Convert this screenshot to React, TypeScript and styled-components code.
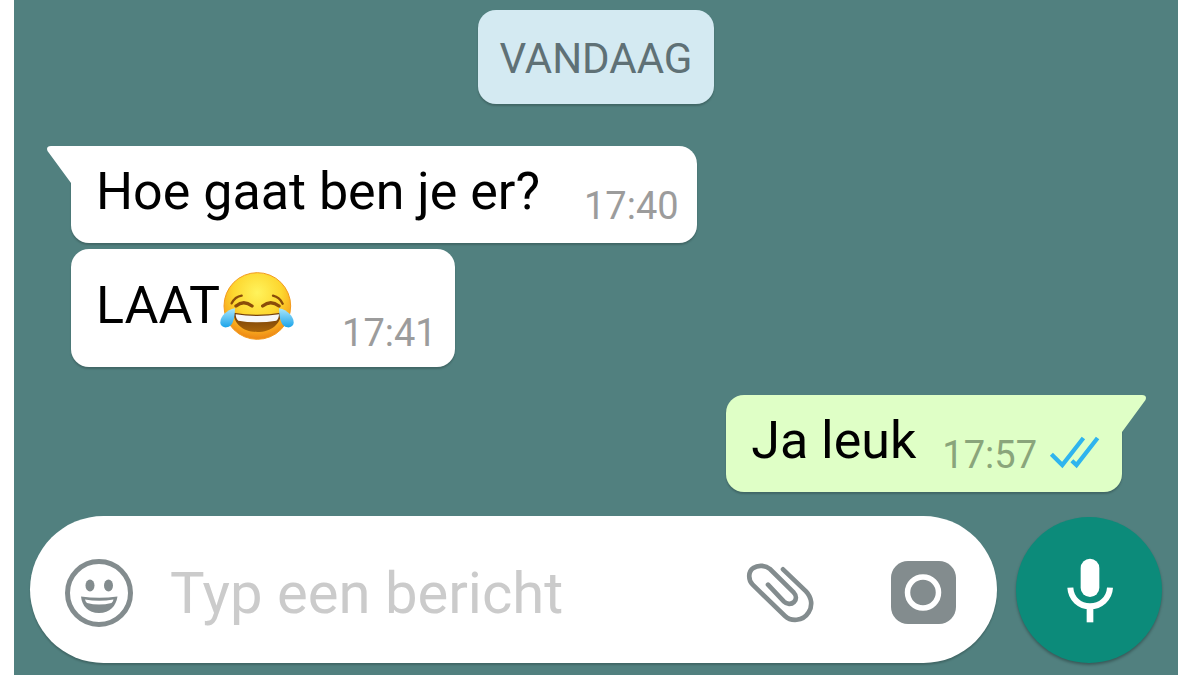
import React from "react";
import styled, { createGlobalStyle } from "styled-components";

const GlobalStyle = createGlobalStyle`
  * { box-sizing: border-box; }
  body {
    margin: 0;
    background: #ffffff;
    font-family: Roboto, "Liberation Sans", sans-serif;
  }
`;

const Chat = styled.main`
  display: flex;
  flex-direction: column;
  min-height: 100vh;
  margin: 0 22px 0 14px;
  padding: 10px 16px 12px;
  background: #51807f;
`;

const DateLabel = styled.time`
  align-self: center;
  margin-bottom: 42px;
  padding: 22px 22px 18px;
  border-radius: 18px;
  background: #d4eaf2;
  box-shadow: 0 2px 2px rgba(0, 0, 0, 0.2);
  color: #5f7176;
  font-size: 42px;
  line-height: 54px;
`;

const Thread = styled.ol`
  display: flex;
  flex-direction: column;
  gap: 6px;
  margin: 0;
  padding: 0 16px 0 17px;
  list-style: none;
`;

const Message = styled.li<{ $own?: boolean; $tail?: boolean }>`
  display: flex;
  align-items: flex-start;
  justify-content: ${(p) => (p.$own ? "flex-end" : "flex-start")};
  margin-top: ${(p) => (p.$own ? "22px" : "0")};
  padding-left: ${(p) => (p.$own || p.$tail ? "0" : "24px")};
`;

const TailShape = styled.svg<{ $own?: boolean }>`
  position: relative;
  z-index: 1;
  flex: none;
  width: 27px;
  height: 40px;
  margin: ${(p) => (p.$own ? "0 0 0 -3px" : "0 -3px 0 0")};
  fill: ${(p) => (p.$own ? "#dfffc6" : "#ffffff")};
`;

const Bubble = styled.div<{ $own?: boolean; $tail?: boolean; $gap: number; $emoji?: boolean }>`
  display: flex;
  align-items: flex-end;
  gap: ${(p) => p.$gap}px;
  padding: 16px ${(p) => (p.$own ? "22px" : "18px")} ${(p) => (p.$emoji ? "12px" : "15px")} 25px;
  border-radius: 18px;
  ${(p) => p.$tail && (p.$own ? "border-top-right-radius: 0;" : "border-top-left-radius: 0;")}
  background: ${(p) => (p.$own ? "#dfffc6" : "#ffffff")};
  box-shadow: 0 2px 2px rgba(0, 0, 0, 0.2);
`;

const Body = styled.p<{ $emoji?: boolean }>`
  display: flex;
  align-items: center;
  margin: 0;
  padding-bottom: ${(p) => (p.$emoji ? "8px" : "6px")};
  color: #000000;
  font-size: 52px;
  line-height: 60px;
  white-space: nowrap;
`;

const Stamp = styled.span<{ $own?: boolean }>`
  display: flex;
  align-items: center;
  gap: 12px;
  color: ${(p) => (p.$own ? "#8aa57b" : "#9c9c9c")};
  font-size: 38px;
  line-height: 44px;
`;

const Ticks = styled.svg`
  width: 51px;
  height: 33px;
  margin-bottom: 6px;
`;

const Composer = styled.form`
  display: flex;
  align-items: center;
  gap: 19px;
  margin-top: auto;
  padding-top: 24px;
`;

const Field = styled.div`
  display: flex;
  flex: 1;
  align-items: center;
  min-width: 0;
  height: 147px;
  padding: 6px 41px 0 34px;
  border-radius: 74px;
  background: #ffffff;
  box-shadow: 0 2px 2px rgba(0, 0, 0, 0.2);
`;

const TextInput = styled.input`
  flex: 1;
  min-width: 0;
  margin: 0 24px 0 36px;
  padding: 0;
  border: 0;
  outline: 0;
  background: transparent;
  color: #000000;
  font-family: inherit;
  font-size: 58px;
  line-height: 68px;
  &::placeholder { color: #cbcbcb; opacity: 1; }
`;

const IconButton = styled.button`
  display: flex;
  flex: none;
  padding: 0;
  border: 0;
  background: transparent;
  color: #838c8e;
  cursor: pointer;
  & + & { margin-left: 74px; }
`;

const MicButton = styled.button`
  display: flex;
  flex: none;
  align-items: center;
  justify-content: center;
  width: 146px;
  height: 146px;
  padding: 2px 0 0 2px;
  border: 0;
  border-radius: 50%;
  background: #0c8b7a;
  box-shadow: 0 2px 3px rgba(0, 0, 0, 0.3);
  cursor: pointer;
`;

function Tail({ own }: { own?: boolean }) {
  return (
    <TailShape $own={own} viewBox="0 0 27 40" aria-hidden="true">
      <path
        d={
          own
            ? "M0 0H23Q27 0 27 3Q27 5 25 7L3 37V40H0Z"
            : "M27 0H4Q0 0 0 3Q0 5 2 7L24 37V40H27Z"
        }
      />
    </TailShape>
  );
}

function JoyEmoji() {
  return (
    <svg width="74" height="82" viewBox="29 15 222 246" role="img" aria-label="tranen van het lachen">
      <defs>
        <radialGradient id="face" cx="0.5" cy="0.3" r="0.72">
          <stop offset="0" stopColor="#fff35c" />
          <stop offset="0.5" stopColor="#fdd72f" />
          <stop offset="0.8" stopColor="#f8a81d" />
          <stop offset="1" stopColor="#ea7f14" />
        </radialGradient>
        <linearGradient id="mouth" x1="0" y1="0" x2="0" y2="1">
          <stop offset="0" stopColor="#6d3a08" />
          <stop offset="1" stopColor="#a8640a" />
        </linearGradient>
        <linearGradient id="tear" x1="0" y1="0" x2="0" y2="1">
          <stop offset="0" stopColor="#a9e6fb" />
          <stop offset="1" stopColor="#1ba4ea" />
        </linearGradient>
      </defs>
      <circle cx="141" cy="138" r="100" fill="url(#face)" stroke="#f39a1c" strokeWidth="3" />
      <g fill="none" stroke="#8a4c0a" strokeLinecap="round">
        <path d="M64 130Q74 110 94 107M188 107Q208 112 217 131" strokeWidth="7" />
        <path d="M77 138Q100 119 125 138M157 138Q181 119 206 138" strokeWidth="10" />
      </g>
      <path d="M70 158Q141 170 212 158C212 190 184 216 141 216S70 190 70 158Z" fill="url(#mouth)" />
      <path d="M76 163Q141 173 206 163Q206 176 198 182Q141 192 84 182Q76 176 76 163Z" fill="#f7f7f7" />
      <path d="M74 145C48 150 30 170 30 187C30 198 39 203 49 202C68 200 73 176 74 145Z" fill="url(#tear)" />
      <path d="M206 145C232 150 250 170 250 187C250 198 241 203 231 202C212 200 207 176 206 145Z" fill="url(#tear)" />
    </svg>
  );
}

function ReadTicks() {
  return (
    <Ticks viewBox="1004 166 152 100" fill="none" stroke="#2fb4ee" strokeWidth="13" role="img" aria-label="gelezen">
      <path d="M1010 221L1043 254L1107 172M1072 241L1086 254L1150 172" />
    </Ticks>
  );
}

export default function App() {
  return (
    <>
      <GlobalStyle />
      <Chat>
        <DateLabel>VANDAAG</DateLabel>
        <Thread>
          <Message $tail>
            <Tail />
            <Bubble $tail $gap={44}>
              <Body>Hoe gaat ben je er?</Body>
              <Stamp>17:40</Stamp>
            </Bubble>
          </Message>
          <Message>
            <Bubble $gap={48} $emoji>
              <Body $emoji>
                LAAT
                <JoyEmoji />
              </Body>
              <Stamp>17:41</Stamp>
            </Bubble>
          </Message>
          <Message $own $tail>
            <Bubble $own $tail $gap={26}>
              <Body>Ja leuk</Body>
              <Stamp $own>
                17:57
                <ReadTicks />
              </Stamp>
            </Bubble>
            <Tail own />
          </Message>
        </Thread>
        <Composer onSubmit={(e) => e.preventDefault()}>
          <Field>
            <IconButton type="button" aria-label="Emoji">
              <svg width="70" height="70" viewBox="0 0 70 70" fill="currentColor">
                <circle cx="35" cy="35" r="31.5" fill="none" stroke="currentColor" strokeWidth="5" />
                <ellipse cx="26" cy="27.5" rx="4.5" ry="6" />
                <ellipse cx="44.5" cy="27.5" rx="4.5" ry="6" />
                <path d="M17 38.500Q35 41 53.500 38.500C52 48 46 55 35 55S18 48 17 38.500Z" />
                <path d="M21 41.500Q35 44 49.500 41.500Q49 43.500 47.500 45Q35 48 23 45Q21.500 43.500 21 41.500Z" fill="#ffffff" />
              </svg>
            </IconButton>
            <TextInput type="text" aria-label="Typ een bericht" placeholder="Typ een bericht" />
            <IconButton type="button" aria-label="Bijlage">
              <svg width="72" height="63" viewBox="43 33 216 189" fill="none" stroke="currentColor" strokeWidth="14" strokeLinecap="round">
                <path d="M157 58L226 124C244 143 246 168 234 187C216 216 180 214 163 198L66 104C52 90 52 64 68 54C84 43 106 47 118 57L188 126C199 138 197 149 190 156C182 164 168 163 160 155L112 104" />
              </svg>
            </IconButton>
            <IconButton type="button" aria-label="Camera">
              <svg width="65" height="63" viewBox="0 0 65 63">
                <rect width="65" height="63" rx="17" fill="currentColor" />
                <circle cx="32" cy="31.500" r="15.500" fill="none" stroke="#ffffff" strokeWidth="5.500" />
              </svg>
            </IconButton>
          </Field>
          <MicButton type="button" aria-label="Spraakbericht opnemen">
            <svg width="48" height="67" viewBox="259 160 144 201" fill="none" stroke="#ffffff">
              <rect x="303" y="165" width="56" height="115" rx="28" fill="#ffffff" stroke="none" />
              <path d="M272 252C274 286 300 308 331 308S389 286 391 252" strokeWidth="18" />
              <path d="M331 308V356" strokeWidth="20" />
            </svg>
          </MicButton>
        </Composer>
      </Chat>
    </>
  );
}
